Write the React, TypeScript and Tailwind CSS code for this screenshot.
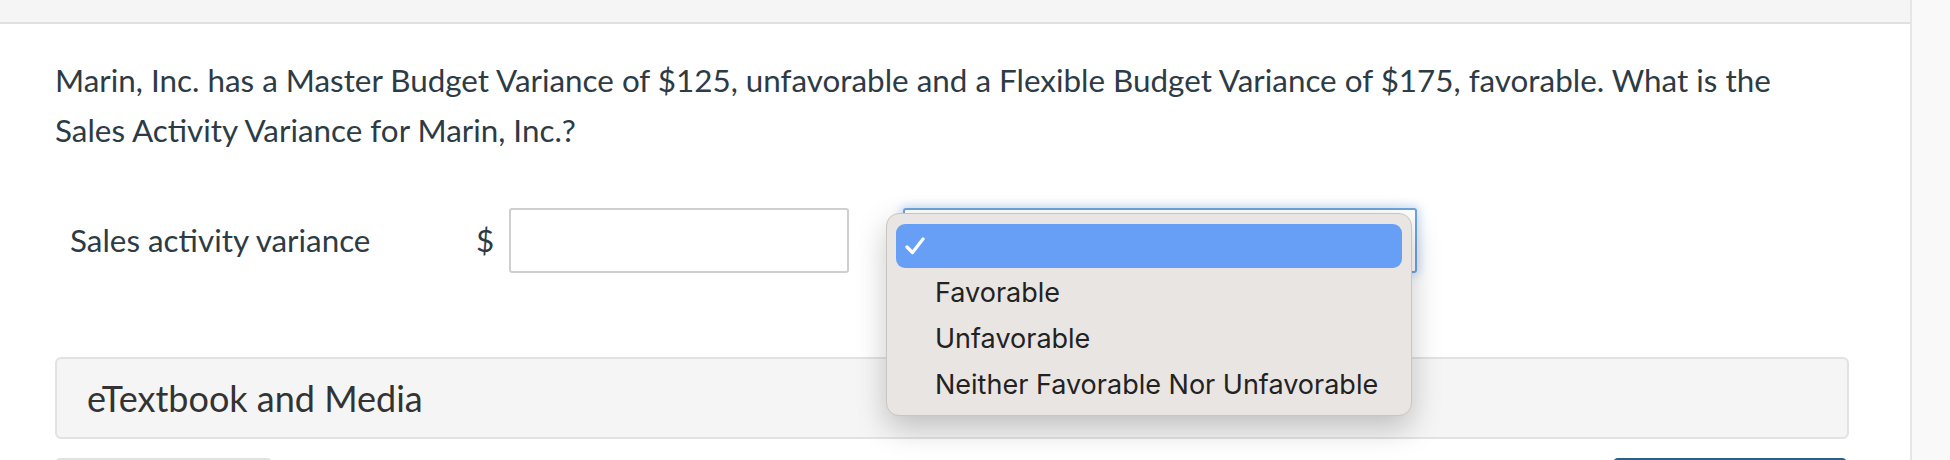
import React from "react";

const options = ["Favorable", "Unfavorable", "Neither Favorable Nor Unfavorable"];

export default function App() {
  return (
    <div className="w-[1950px] h-[460px] overflow-hidden bg-[#f9f9f9] flex font-['Lato','Open_Sans',sans-serif] text-[#2d3b45]">
      <div className="w-[1912px] shrink-0 bg-white border-r-2 border-[#e6e6e6] flex flex-col">
        {/* top strip */}
        <div className="h-[24px] shrink-0 bg-[#f5f5f5] border-b-2 border-[#e0e0e0]" />

        <div className="pl-[55px] pr-[61px]">
          {/* Question */}
          <p className="mt-[31px] max-w-[1750px] text-[31.4px] leading-[50px]">
            Marin, Inc. has a Master Budget Variance of $125, unfavorable and a Flexible Budget Variance of $175,
            favorable. What is the Sales Activity Variance for Marin, Inc.?
          </p>

          {/* Answer row */}
          <div className="mt-[53px] flex items-center h-[65px]">
            <div className="pl-[15px] w-[421px] text-[31.4px]">Sales activity variance</div>
            <div className="w-[33px] text-[31.4px]">$</div>
            <input
              type="text"
              className="w-[340px] h-[65px] border-2 border-[#cfcfcf] rounded-[3px] bg-white outline-none"
            />
            <div className="relative ml-[54px]">
              <div className="w-[514px] h-[65px] bg-white border-2 border-[#6fa3dc] rounded-[3px] shadow-[0_0_8px_3px_rgba(120,170,230,0.35)]" />

              {/* open select menu */}
              <div className="absolute left-[-17px] top-[5px] w-[526px] h-[203px] z-10 rounded-[13px] bg-[#e9e5e3] border border-[#c9c5c2] shadow-[0_12px_30px_rgba(0,0,0,0.22)] px-[9px] pt-[10px] font-['Inter','Liberation_Sans',sans-serif] text-[27px] text-[#222]">
                <div className="h-[44px] mb-[2px] rounded-[9px] bg-[#689ff6] flex items-center pl-[9px]">
                  <svg width="20" height="18" viewBox="0 0 20 18" fill="none">
                    <path d="M2 10 L7.5 15.5 L18 2" stroke="white" strokeWidth="3.2" strokeLinecap="round" strokeLinejoin="round" />
                  </svg>
                </div>
                {options.map((o) => (
                  <div key={o} className="h-[46px] flex items-center pl-[39px]">
                    {o}
                  </div>
                ))}
              </div>
            </div>
          </div>

          {/* eTextbook panel */}
          <div className="mt-[84px] h-[82px] bg-[#f5f5f5] border-2 border-[#e2e2e2] rounded-[6px] flex items-center pl-[30px] text-[36px] text-[#333]">
            eTextbook and Media
          </div>

          {/* buttons peeking in */}
          <div className="mt-[19px] flex justify-between">
            <div className="w-[217px] h-[40px] rounded-[5px] border-2 border-[#e2e2e2] bg-[#f5f5f5]" />
            <div className="w-[234px] h-[40px] mr-[2px] rounded-[5px] bg-[#2d5f86]" />
          </div>
        </div>
      </div>
    </div>
  );
}
